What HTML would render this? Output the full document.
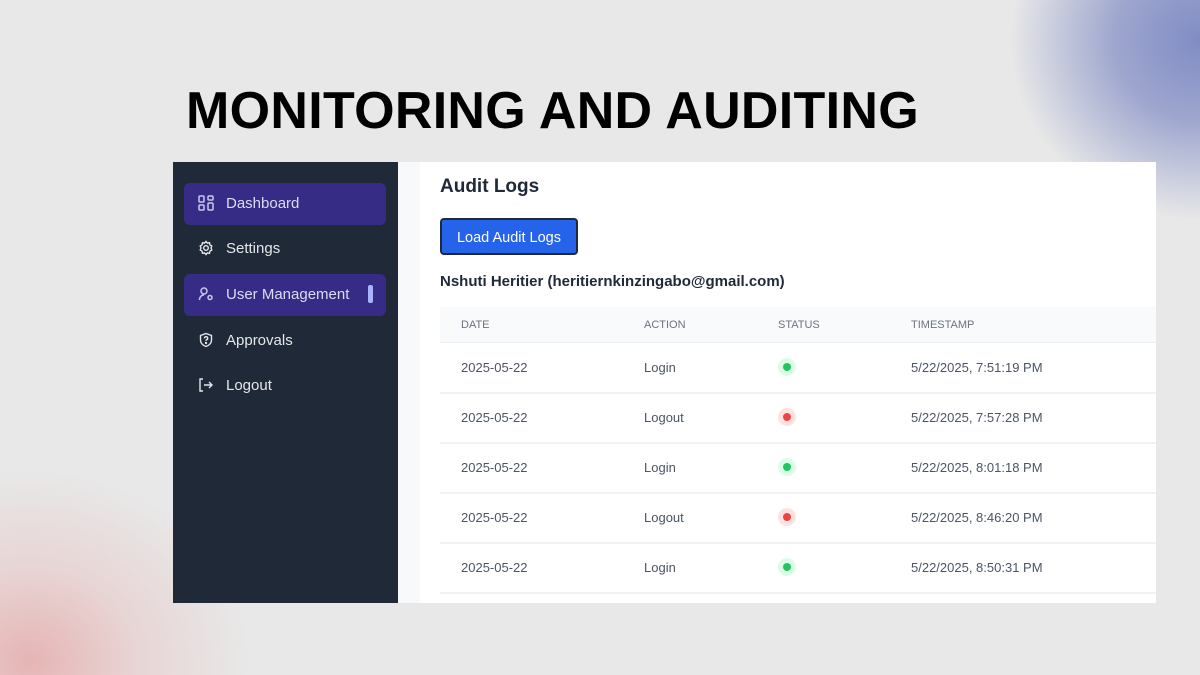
<!DOCTYPE html>
<html style="height:675px;overflow:hidden"><head><style>
body{margin:0;width:1200px;height:675px;overflow:hidden;position:relative;background:#e8e8e8;font-family:"Liberation Sans",sans-serif}
.bg{position:absolute;left:0;top:0;width:1200px;height:675px;overflow:hidden}
.blob1{position:absolute;left:1010px;top:-140px;width:380px;height:360px;border-radius:50%;background:radial-gradient(closest-side,rgba(128,140,196,1),rgba(140,150,200,.8) 45%,rgba(232,232,232,0) 100%)}
.blob2{position:absolute;left:-190px;top:470px;width:440px;height:380px;border-radius:50%;background:radial-gradient(closest-side,rgba(230,175,175,.9),rgba(232,195,195,.5) 50%,rgba(232,232,232,0) 100%)}
h1{position:absolute;left:186px;top:81px;margin:0;font-size:52px;font-weight:700;color:#000;letter-spacing:.3px}
.shot{position:absolute;left:173px;top:162px;width:983px;height:441px;background:#f8f9fb;overflow:hidden}
.side{position:absolute;left:0;top:0;width:225px;height:441px;background:#1f2937}
.item{position:absolute;left:11px;width:202px;height:42px;border-radius:6px;color:#e5e7eb;font-size:15px}
.item.act{background:#372c85}
.item span{position:absolute;left:42px;top:12px}
.item svg{position:absolute;left:14px;top:12px}
.card{position:absolute;left:247px;top:0;width:736px;height:441px;background:#fff}
.t{position:absolute;left:20px;top:14px;font-size:19px;font-weight:700;color:#1f2937}
.btn{position:absolute;left:20px;top:56px;width:138px;height:37px;background:#2563eb;border:2px solid #1e293b;border-radius:4px;color:#fff;font-size:14.5px;text-align:center;line-height:36px;box-sizing:border-box}
.u{position:absolute;left:20px;top:111px;font-size:15px;font-weight:700;color:#1f2937}
.th{position:absolute;left:20px;top:145px;width:720px;height:35px;background:#f9fafb;border-bottom:1px solid #eceef1;font-size:11px;color:#6b7280}
.row{position:absolute;left:20px;width:720px;height:50px;border-bottom:2px solid #f0f1f3;font-size:13px;color:#4b5563}
.c{position:absolute;top:18px}
.th .c{top:12px}
.dot{position:absolute;left:338px;top:16px;width:18px;height:18px;border-radius:50%}
.dot i{position:absolute;left:5px;top:5px;width:8px;height:8px;border-radius:50%}
.g{background:#dcfce7}.g i{background:#22c55e}
.r{background:#fee2e2}.r i{background:#ef4444}
</style></head><body>
<div class="bg"><div class="blob1"></div><div class="blob2"></div></div>
<h1>MONITORING AND AUDITING</h1>
<div class="shot">
<div class="side">
<div class="item act" style="top:21px"><svg width="16" height="16" viewBox="0 0 16 16" fill="none" stroke="#c7c9ee" stroke-width="1.5"><rect x="1" y="1" width="5" height="6" rx="1"/><rect x="10" y="1" width="5" height="4" rx="1"/><rect x="1" y="10" width="5" height="5" rx="1"/><rect x="10" y="8" width="5" height="7" rx="1"/></svg><span style="color:#dcdcf5">Dashboard</span></div>
<div class="item" style="top:66px"><svg width="16" height="16" viewBox="0 0 16 16" fill="none" stroke="#e5e7eb" stroke-width="1.4"><circle cx="8" cy="8" r="2.3"/><path d="M8 1.5l1.4 1.6 2.1-.4.4 2.1L13.8 6l-.8 2 .8 2-1.9 1.2-.4 2.1-2.1-.4L8 14.5l-1.4-1.6-2.1.4-.4-2.1L2.2 10l.8-2-.8-2 1.9-1.2.4-2.1 2.1.4z"/></svg><span>Settings</span></div>
<div class="item act" style="top:112px"><svg width="16" height="16" viewBox="0 0 16 16" fill="none" stroke="#c7c9ee" stroke-width="1.5"><circle cx="6" cy="5" r="3"/><path d="M1.5 14c0-3 2-5 4.5-5"/><circle cx="12" cy="11.5" r="2"/></svg><span style="color:#dcdcf5">User Management</span><div style="position:absolute;left:184px;top:11px;width:5px;height:18px;border-radius:2px;background:#a5b4fc"></div></div>
<div class="item" style="top:158px"><svg width="16" height="16" viewBox="0 0 16 16" fill="none" stroke="#e5e7eb" stroke-width="1.4"><path d="M8 1.5l5.5 2v4.5c0 3.2-2.5 5.5-5.5 6.5C5 13.5 2.5 11.2 2.5 8V3.5z"/><path d="M6.5 6.3a1.6 1.6 0 1 1 2 1.5c-.4.2-.5.5-.5 1"/><circle cx="8" cy="11" r=".5"/></svg><span>Approvals</span></div>
<div class="item" style="top:203px"><svg width="16" height="16" viewBox="0 0 16 16" fill="none" stroke="#e5e7eb" stroke-width="1.4"><path d="M5 2H2v12h3"/><path d="M6 8h8M11 5l3 3-3 3"/></svg><span>Logout</span></div>
</div>
<div class="card">
<div class="t">Audit Logs</div>
<div class="btn">Load Audit Logs</div>
<div class="u">Nshuti Heritier (heritiernkinzingabo@gmail.com)</div>
<div class="th"><span class="c" style="left:21px">DATE</span><span class="c" style="left:204px">ACTION</span><span class="c" style="left:338px">STATUS</span><span class="c" style="left:471px">TIMESTAMP</span></div>
<div class="row" style="top:180px"><span class="c" style="left:21px">2025-05-22</span><span class="c" style="left:204px">Login</span><div class="dot g"><i></i></div><span class="c" style="left:471px">5/22/2025, 7:51:19 PM</span></div>
<div class="row" style="top:230px"><span class="c" style="left:21px">2025-05-22</span><span class="c" style="left:204px">Logout</span><div class="dot r"><i></i></div><span class="c" style="left:471px">5/22/2025, 7:57:28 PM</span></div>
<div class="row" style="top:280px"><span class="c" style="left:21px">2025-05-22</span><span class="c" style="left:204px">Login</span><div class="dot g"><i></i></div><span class="c" style="left:471px">5/22/2025, 8:01:18 PM</span></div>
<div class="row" style="top:330px"><span class="c" style="left:21px">2025-05-22</span><span class="c" style="left:204px">Logout</span><div class="dot r"><i></i></div><span class="c" style="left:471px">5/22/2025, 8:46:20 PM</span></div>
<div class="row" style="top:380px"><span class="c" style="left:21px">2025-05-22</span><span class="c" style="left:204px">Login</span><div class="dot g"><i></i></div><span class="c" style="left:471px">5/22/2025, 8:50:31 PM</span></div>
</div>
</div>
</body></html>
